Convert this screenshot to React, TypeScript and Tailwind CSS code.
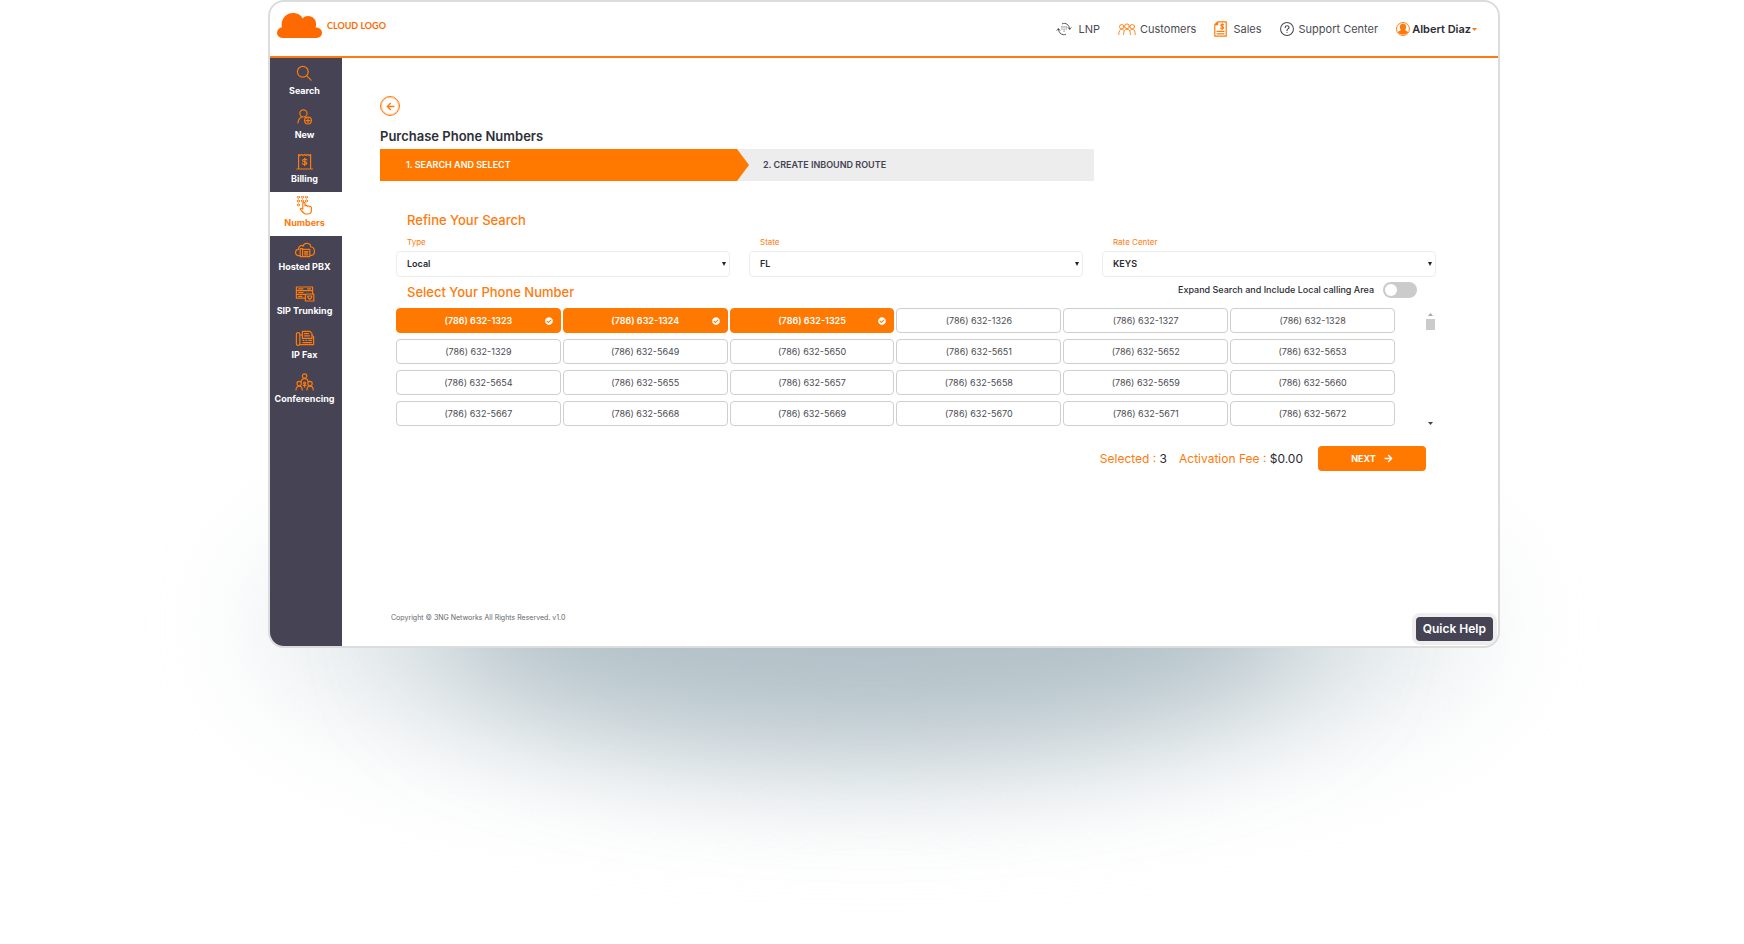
import { useState } from 'react';
import type { ReactNode } from 'react';
import { FaArrowLeft, FaArrowRight, FaCheckCircle } from 'react-icons/fa';

interface IconProps {
  className?: string;
  box?: string;
  children: ReactNode;
}

function Icon({ className = 'size-4', box = '0 0 20 20', children }: IconProps) {
  return (
    <svg
      className={className}
      viewBox={box}
      fill="none"
      stroke="currentColor"
      strokeWidth={1.2}
      strokeLinecap="round"
      strokeLinejoin="round"
      aria-hidden="true"
    >
      {children}
    </svg>
  );
}

const sideItems = [
  {
    label: 'Search',
    icon: (
      <>
        <circle cx="7.8" cy="7.8" r="5.4" />
        <path d="M11.8 11.8 L16 16.2" />
      </>
    ),
  },
  {
    label: 'New',
    icon: (
      <>
        <circle cx="8.4" cy="5.4" r="3.6" />
        <path d="M3 15 C3 12 4.8 10 7 8.8 M9.8 8.8 L11 9.6" />
        <circle cx="13" cy="12.6" r="3.4" />
        <path d="M13 10.6 V14.6 M11 12.6 H15" />
      </>
    ),
  },
  {
    label: 'Billing',
    icon: (
      <>
        <path d="M1.8 17 H17.6 M3.6 17 V2.6 L5 3.6 L6.4 2.4 L8 3.6 L9.6 2.4 L11.2 3.6 L12.8 2.4 L14.2 3.6 L15.6 2.6 V17" />
        <path d="M11.8 8 C11.4 7 7.6 6.8 7.6 8.4 C7.6 10.2 11.8 9.2 11.8 11.2 C11.8 13 7.6 12.8 7.4 11.4 M9.7 6 V13.6" />
      </>
    ),
  },
  {
    label: 'Numbers',
    icon: (
      <>
        <g strokeWidth={1}>
          <circle cx="3.4" cy="1.2" r="1.1" />
          <circle cx="7.4" cy="1.2" r="1.1" />
          <circle cx="11.4" cy="1.2" r="1.1" />
          <circle cx="3.4" cy="5" r="1.1" />
          <circle cx="7.4" cy="5" r="1.1" />
          <circle cx="11.4" cy="5" r="1.1" />
          <circle cx="3.4" cy="8.8" r="1.1" />
        </g>
        <path d="M7.8 13 V7.4 C7.8 6 10 6 10 7.4 V10 C10.2 9 12 9.2 12.1 10.4 C12.4 9.4 14.2 9.6 14.3 10.8 C14.8 10 16.4 10.4 16.4 11.6 V14.2 C16.4 16.6 14.8 18 12.6 18 H11.2 C8.8 18 7.4 15.6 5.4 13.4 C5 12.2 6.6 11.8 7.8 13 Z" />
      </>
    ),
  },
  {
    label: 'Hosted PBX',
    icon: (
      <>
        <path d="M4.8 15.6 H3.2 C-0.6 15 -0.2 9.4 3.6 9.4 C3 6 7 4.6 8 6.2 C9.6 1.8 15.6 2.8 15.8 7 C19.8 6.8 21.2 14.6 16.6 15.4 H15.6" />
        <path d="M5.2 8.6 H7.6 V16.6 H5.2 Z M7.6 9.4 H14.8 V16.6 H7.6 M9.6 11.6 H12.8 M9.6 13.2 H12.8 M9.6 14.8 H12.8" />
      </>
    ),
  },
  {
    label: 'SIP Trunking',
    icon: (
      <>
        <path d="M1.4 3 H17.6 V6.6 H1.4 Z M17.6 10 V6.6 M1.4 6.6 V10.4 H10.6 M1.4 10.4 V14.2 H10 M3.6 4.8 H8 M12.6 4.8 H15.6 M3.6 8.5 H8 M3.6 12.3 H7" />
        <path d="M11.4 10 H18.8 V17 H10.4 V11.4 Z M12.6 12 H16.8 L16.2 14 L14.8 15.2 L13.2 14 Z" />
      </>
    ),
  },
  {
    label: 'IP Fax',
    icon: (
      <>
        <path d="M1.4 6 Q1.4 4.6 3 4.6 Q4.8 4.6 4.8 6 V16 Q4.8 17.4 3 17.4 Q1.4 17.4 1.4 16 Z M4.8 7 H7 M4.8 16.6 H18.6 V8.6 L17 7.6" />
        <path d="M7.4 10.4 V3.4 H15 L17 5.6 V10.4 Z M9.4 5.6 H13.6 M9.4 7.8 H14.6 M8 12.4 H8.8 M11 12.4 H11.8 M14 12.4 H16.6 M8 14.6 H16.6" />
      </>
    ),
  },
  {
    label: 'Conferencing',
    icon: (
      <>
        <circle cx="9.6" cy="4" r="2.2" />
        <path d="M6.2 9.6 C6.2 7.8 7.6 6.6 9.6 6.6 C11.6 6.6 13 7.8 13 9.6" />
        <circle cx="4.2" cy="11.6" r="2.2" />
        <path d="M1 18 C1 15.4 2.2 14.2 4.2 14.2 C6.2 14.2 7.2 15.4 7.2 18" />
        <circle cx="15" cy="11.6" r="2.2" />
        <path d="M12 18 C12 15.4 13 14.2 15 14.2 C17 14.2 18.2 15.4 18.2 18" />
        <circle cx="9.6" cy="11" r="1" />
        <path d="M9.6 12 V15 M8.2 13.4 H11" />
      </>
    ),
  },
];

const numbers = [
  '(786) 632-1323', '(786) 632-1324', '(786) 632-1325', '(786) 632-1326', '(786) 632-1327', '(786) 632-1328',
  '(786) 632-1329', '(786) 632-5649', '(786) 632-5650', '(786) 632-5651', '(786) 632-5652', '(786) 632-5653',
  '(786) 632-5654', '(786) 632-5655', '(786) 632-5657', '(786) 632-5658', '(786) 632-5659', '(786) 632-5660',
  '(786) 632-5667', '(786) 632-5668', '(786) 632-5669', '(786) 632-5670', '(786) 632-5671', '(786) 632-5672',
];

function Header() {
  return (
    <header className="flex h-[56px] shrink-0 items-center justify-between border-b-2 border-[#ff7a0a] pr-[21px] pl-[7px]">
      <a href="#home" className="mb-2 flex items-center gap-[5px] text-[#ff6a00]">
        <svg className="h-[25px] w-[45px]" viewBox="0 0 45 25" fill="currentColor" aria-hidden="true">
          <path d="M5.5 25 C2.5 25 0 22.6 0 19.8 C0 17 2 14.8 4.8 14.2 C3.6 6 9 0 16 0 C20.6 0 24 2.2 25.8 5.4 C27 3.8 29 3 31 3 C36 3 39.8 7 39 12.6 C39 13.2 38.8 13.8 38.6 14.4 C42.4 14.2 45 16.6 45 19.8 C45 22.6 42.6 25 39.6 25 Z" />
        </svg>
        <span className="pt-0.5 font-['Lato',sans-serif] text-[9px] leading-4 font-bold">CLOUD LOGO</span>
      </a>
      <nav className="flex items-center gap-[18px] text-[11px] leading-4 text-[#4b4b52]">
        <a href="#lnp" className="flex items-center gap-[6px]">
          <Icon className="size-4">
            <path d="M8 3.4 C12 1.6 16.8 4.6 17 10 M15.2 8.4 L17 10.4 L18.8 8.4 M12 16.8 C8 18.4 3.2 15.4 3 10 M1.2 11.6 L3 9.6 L4.8 11.6" />
            <path d="M7.4 7.4 H7.5 M10 7.4 H10.1 M12.6 7.4 H12.7 M7.4 10 H7.5 M10 10 H10.1 M12.6 10 H12.7 M10 12.6 H10.1" strokeWidth={1.4} />
          </Icon>
          LNP
        </a>
        <a href="#customers" className="flex items-center gap-1">
          <Icon className="h-3 w-[18px] text-[#ff7a0a]" box="0 0 24 16">
            <circle cx="12" cy="4.4" r="3.2" />
            <path d="M7.4 15.4 C7.4 10.8 9 8.2 12 8.2 C15 8.2 16.6 10.8 16.6 15.4" />
            <circle cx="5" cy="5" r="3" />
            <path d="M1 15.4 C1 11 2.4 8.4 5 8.4 C6.4 8.4 7.4 9 8 10" />
            <circle cx="19" cy="5" r="3" />
            <path d="M23 15.4 C23 11 21.6 8.4 19 8.4 C17.6 8.4 16.6 9 16 10" />
          </Icon>
          Customers
        </a>
        <a href="#sales" className="flex items-center gap-[6px]">
          <Icon className="h-4 w-[13px] text-[#ff7a0a]" box="0 0 13 16">
            <path d="M3.6 0.8 H12.2 V15.2 H0.8 V3.6 Z M3.6 0.8 V3.6 H0.8" />
            <path d="M9.6 3.8 C9 3 6.8 3 6.8 4.4 C6.8 5.8 9.6 5 9.6 6.6 C9.6 8 7 8 6.6 7 M8.2 2.6 V8.4 M3 10.4 H10 M3 12.8 H10" />
          </Icon>
          Sales
        </a>
        <a href="#support" className="flex items-center gap-[5px]">
          <Icon className="size-[14px]">
            <circle cx="10" cy="10" r="9.2" strokeWidth={1.5} />
            <path d="M7.4 8 C7.4 4.4 12.8 4.6 12.8 7.8 C12.8 9.8 10 9.8 10 12 M10 14.6 V14.8" strokeWidth={1.7} />
          </Icon>
          Support Center
        </a>
        <button type="button" className="flex items-center font-semibold text-[#2b2b33]">
          <svg className="mr-0.5 size-[14px] text-[#ff7a0a]" viewBox="0 0 20 20" aria-hidden="true">
            <circle cx="10" cy="10" r="9.2" fill="none" stroke="currentColor" strokeWidth="1.4" />
            <path d="M10 2.6 C13.2 2.6 14.8 4.8 14.6 7.6 C14.4 9.8 13.2 11 13 11.4 C13.8 12.6 16.6 12.6 17.4 14.6 C13.6 19 6.4 19 2.6 14.6 C3.4 12.6 6.2 12.6 7 11.4 C6.8 11 5.6 9.8 5.4 7.6 C5.2 4.8 6.8 2.6 10 2.6 Z" fill="currentColor" />
          </svg>
          Albert Diaz
          <svg className="ml-px h-[3px] w-[5px] text-[#ff7a0a]" viewBox="0 0 5 3" fill="currentColor" aria-hidden="true">
            <path d="M0 0 H5 L2.5 3 Z" />
          </svg>
        </button>
      </nav>
    </header>
  );
}

function Sidebar() {
  return (
    <nav className="flex w-[72px] shrink-0 flex-col bg-[#454354] pt-0.5">
      {sideItems.map((item) => (
        <a
          key={item.label}
          href={`#${item.label.toLowerCase().replace(' ', '-')}`}
          className={
            item.label === 'Numbers'
              ? 'flex h-11 flex-col items-center bg-white pt-1 pr-[3px] text-[9px] leading-3 font-bold text-[#ff7a0a]'
              : 'flex h-11 flex-col items-center pt-1 pr-[3px] text-[9px] leading-3 font-bold text-white'
          }
        >
          <Icon className="mb-px size-5 text-[#ff7a0a]">{item.icon}</Icon>
          <span className="whitespace-nowrap">{item.label}</span>
        </a>
      ))}
    </nav>
  );
}

function Wizard() {
  return (
    <ol className="mt-[3px] flex h-8 w-full max-w-[714px] items-stretch bg-[#ededed] text-[9px] font-semibold">
      <li className="flex w-1/2 items-center bg-[#ff7800] pl-[26px] text-white">1. SEARCH AND SELECT</li>
      <li className="flex w-1/2 items-center text-[#454354]">
        <svg className="mr-[14px] h-8 w-3 text-[#ff7800]" viewBox="0 0 12 32" fill="currentColor" aria-hidden="true">
          <path d="M0 0 L12 16 L0 32 Z" />
        </svg>
        2. CREATE INBOUND ROUTE
      </li>
    </ol>
  );
}

function Field({ id, label, value }: { id: string; label: string; value: string }) {
  return (
    <div>
      <label htmlFor={id} className="block pl-[11px] text-[8px] leading-3 text-[#ff7a0a]">
        {label}
      </label>
      <div className="relative mt-[3px]">
        <select
          id={id}
          defaultValue={value}
          className="block h-[26px] w-full appearance-none rounded-sm border border-[#ededed] bg-white px-[10px] text-[9px] font-semibold text-[#2b2b33]"
        >
          <option>{value}</option>
        </select>
        <svg className="pointer-events-none absolute top-[11px] right-1 size-1" viewBox="0 0 4 4" fill="#222" aria-hidden="true">
          <path d="M0 0 H4 L2 4 Z" />
        </svg>
      </div>
    </div>
  );
}

export default function App() {
  const [selected, setSelected] = useState<string[]>(numbers.slice(0, 3));
  const [expand, setExpand] = useState(false);

  const toggle = (n: string) =>
    setSelected((prev) => (prev.includes(n) ? prev.filter((p) => p !== n) : [...prev, n]));

  return (
    <div className="relative min-h-screen overflow-hidden bg-white pr-[244px] pl-[268px] font-['Inter','Open_Sans',sans-serif]">
      {/* soft shadow under the window */}
      <div className="absolute top-[470px] left-[15%] h-[310px] w-[70%] rounded-[50%] bg-[#e3e9eb] blur-[60px]" />
      <div className="absolute top-[490px] left-1/4 h-[250px] w-1/2 rounded-[50%] bg-[#b0bfc6] blur-[60px]" />

      <div className="relative flex min-h-[648px] flex-col overflow-hidden rounded-2xl border-2 border-[#dcdcdc] bg-white">
        <Header />
        <div className="flex flex-1">
          <Sidebar />
          <main className="flex min-w-0 flex-1 flex-col pt-[38px] pr-[62px] pb-[22px] pl-[38px]">
            <button
              type="button"
              aria-label="Back"
              className="flex size-5 items-center justify-center rounded-full border border-[#ff7a0a] text-[#ff7a0a] ring-1 ring-[#ff7a0a]/40 ring-inset"
            >
              <FaArrowLeft className="size-[9px]" />
            </button>
            <h1 className="mt-[10px] text-[13px] leading-5 font-semibold text-[#2f2f38]">Purchase Phone Numbers</h1>
            <Wizard />

            <section className="mt-[27px] pl-4">
              <h2 className="pl-[11px] text-[13px] leading-6 font-medium text-[#ff7a0a]">Refine Your Search</h2>
              <div className="mt-1 grid grid-cols-3 gap-x-[19px]">
                <Field id="type" label="Type" value="Local" />
                <Field id="state" label="State" value="FL" />
                <Field id="rate-center" label="Rate Center" value="KEYS" />
              </div>

              <div className="mt-[3px] flex items-center justify-between pr-[19px] pl-[11px]">
                <h2 className="text-[13px] leading-6 font-medium text-[#ff7a0a]">Select Your Phone Number</h2>
                <label className="mb-1 flex items-center gap-[9px] text-[9px] leading-4 font-medium text-[#2b2b33]">
                  Expand Search and Include Local calling Area
                  <input
                    type="checkbox"
                    checked={expand}
                    onChange={(e) => setExpand(e.target.checked)}
                    className="h-4 w-[34px] appearance-none rounded-full bg-[#cbcbcb] before:m-0.5 before:block before:size-3 before:rounded-full before:bg-white checked:bg-[#ff7800] checked:before:ml-5"
                  />
                </label>
              </div>

              <div className="mt-1 flex">
                <div className="grid flex-1 grid-cols-6 gap-x-0.5 gap-y-[6px]">
                  {numbers.map((n) => {
                    const on = selected.includes(n);
                    return (
                      <button
                        key={n}
                        type="button"
                        aria-pressed={on}
                        onClick={() => toggle(n)}
                        className={
                          on
                            ? 'relative h-[25px] rounded-sm border border-[#ff7800] bg-[#ff7800] text-[9px] font-semibold text-white'
                            : 'relative h-[25px] rounded-sm border border-[#cfcfcf] bg-white text-[9px] text-[#4b4b52]'
                        }
                      >
                        {n}
                        {on && <FaCheckCircle className="absolute top-2 right-[7px] size-2" />}
                      </button>
                    );
                  })}
                </div>
                <div className="mr-px ml-[31px] flex w-[9px] flex-col items-center py-[5px]" aria-hidden="true">
                  <svg className="h-[3px] w-[5px]" viewBox="0 0 5 3" fill="#a8a8a8">
                    <path d="M0 3 H5 L2.5 0 Z" />
                  </svg>
                  <div className="mt-[3px] h-[11px] w-full bg-[#cbcbcb]" />
                  <svg className="mt-auto -mb-1 h-[3px] w-[5px]" viewBox="0 0 5 3" fill="#444">
                    <path d="M0 0 H5 L2.5 3 Z" />
                  </svg>
                </div>
              </div>

              <div className="mt-5 flex items-center justify-end pr-[10px] text-[12px] leading-5 text-[#2b2b33]">
                <p>
                  <span className="text-[#ff7a0a]">Selected :</span> {selected.length}
                </p>
                <p className="ml-3">
                  <span className="text-[#ff7a0a]">Activation Fee :</span> $0.00
                </p>
                <button
                  type="button"
                  className="ml-[15px] flex h-[25px] w-[108px] items-center justify-center gap-2 rounded-sm bg-[#ff7800] text-[9px] font-bold text-white"
                >
                  NEXT
                  <FaArrowRight className="size-[9px]" />
                </button>
              </div>
            </section>

            <footer className="mt-auto pl-[11px] text-[7px] leading-3 text-[#66666c]">
              Copyright © 3NG Networks All Rights Reserved. v1.0
            </footer>
          </main>
        </div>
        <button
          type="button"
          className="absolute right-[5px] bottom-[5px] h-6 rounded-sm bg-[#454354] px-[7px] text-[12px] font-semibold text-white ring-4 ring-[#eeeeee]"
        >
          Quick Help
        </button>
      </div>
    </div>
  );
}
